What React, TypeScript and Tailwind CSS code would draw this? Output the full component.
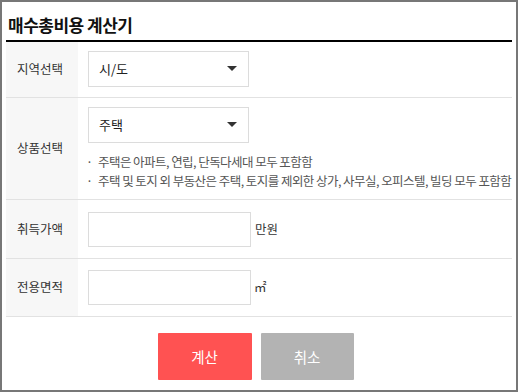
function SelectBox({ value }: { value: string }) {
  return (
    <div className="flex items-center justify-between w-[161px] h-[36px] border border-[#dcdcdc] bg-white pl-[10px] pr-[10px]">
      <span className="text-[13px] text-[#222]">{value}</span>
      <svg width="10" height="6" viewBox="0 0 10 6" className="mr-[1px]">
        <path d="M0 0 H10 L5 5 Z" fill="#333" />
      </svg>
    </div>
  );
}

function Row({ label, children, className = "" }: { label: string; children: React.ReactNode; className?: string }) {
  return (
    <div className={`flex border-b border-[#e2e2e2] ${className}`}>
      <div className="w-[72px] shrink-0 bg-[#f7f7f7] flex items-center pl-[11px] text-[12.5px] text-[#333]">
        {label}
      </div>
      <div className="flex-1 pl-[10px]">{children}</div>
    </div>
  );
}

export default function App() {
  return (
    <div
      className="w-[518px] h-[392px] border-2 border-[#777] bg-white px-[4px]"
      style={{ fontFamily: '"Noto Sans CJK KR", "Noto Sans", sans-serif' }}
    >
      <h1 className="h-[40px] flex items-center pl-[2px] pt-[8px] text-[17px] font-bold text-[#111] tracking-[-0.5px] border-b-2 border-black">
        매수총비용 계산기
      </h1>

      <Row label="지역선택" className="h-[56px]">
        <div className="pt-[9px]">
          <SelectBox value="시/도" />
        </div>
      </Row>

      <Row label="상품선택" className="h-[102px]">
        <div className="pt-[9px]">
          <SelectBox value="주택" />
          <ul className="mt-[9px] text-[12.5px] leading-[19px] text-[#555] tracking-[-0.55px] whitespace-nowrap">
            <li className="flex">
              <span className="w-[12px] -ml-[2px]">·</span>주택은 아파트, 연립, 단독다세대 모두 포함함
            </li>
            <li className="flex">
              <span className="w-[12px] -ml-[2px]">·</span>주택 및 토지 외 부동산은 주택, 토지를 제외한 상가, 사무실, 오피스텔, 빌딩 모두 포함함
            </li>
          </ul>
        </div>
      </Row>

      <Row label="취득가액" className="h-[59px]">
        <div className="flex items-center h-full gap-[4px]">
          <input className="w-[163px] h-[35px] border border-[#dcdcdc] outline-none" />
          <span className="text-[12.5px] text-[#333]">만원</span>
        </div>
      </Row>

      <Row label="전용면적" className="h-[58px]">
        <div className="flex items-center h-full gap-[3px]">
          <input className="w-[163px] h-[35px] border border-[#dcdcdc] outline-none" />
          <span className="text-[12.5px] text-[#333]">㎡</span>
        </div>
      </Row>

      <div className="flex justify-center gap-[9px] pt-[16px] pr-[7px]">
        <button className="w-[94px] h-[47px] bg-[#ff5252] text-white text-[14.5px] rounded-[1px]">계산</button>
        <button className="w-[93px] h-[47px] bg-[#b3b3b3] text-white text-[14.5px] rounded-[1px]">취소</button>
      </div>
    </div>
  );
}
